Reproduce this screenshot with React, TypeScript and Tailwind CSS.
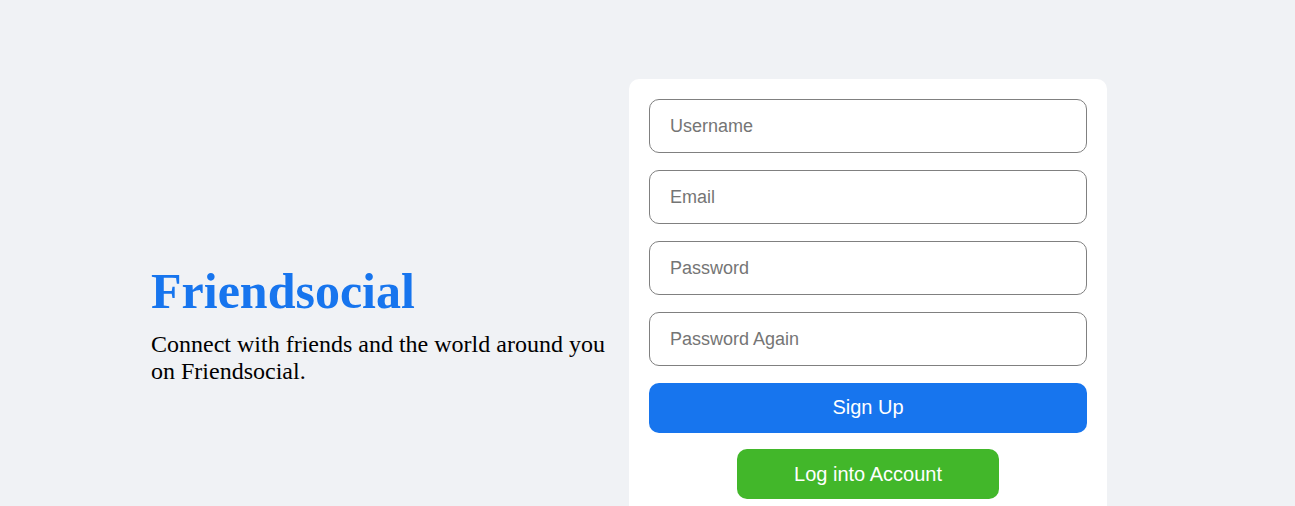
export default function App() {
  return (
    <div className="min-h-screen w-full bg-[#f0f2f5] pl-[151px] pt-[79px]">
      <div className="flex w-[956px] items-start">
        <div className="flex flex-1 flex-col pt-[184px] font-['Liberation_Serif',serif]">
          <h3 className="mb-[11px] text-[50px] font-extrabold leading-[57px] text-[#1775ee]">Friendsocial</h3>
          <span className="text-[24px] leading-[27px] text-black">
            Connect with friends and the world around you on Friendsocial.
          </span>
        </div>
        <div className="flex flex-1 flex-col">
          <div className="flex flex-col rounded-[10px] bg-white p-[20px] font-['Liberation_Sans',Arial,sans-serif]">
            <div className="flex flex-col gap-[17px]">
              <input placeholder="Username" className="h-[54px] rounded-[10px] border border-[#808080] pl-[20px] text-[18px] outline-none placeholder:text-[#757575]" />
              <input placeholder="Email" className="h-[54px] rounded-[10px] border border-[#808080] pl-[20px] text-[18px] outline-none placeholder:text-[#757575]" />
              <input placeholder="Password" type="password" className="h-[54px] rounded-[10px] border border-[#808080] pl-[20px] text-[18px] outline-none placeholder:text-[#757575]" />
              <input placeholder="Password Again" type="password" className="h-[54px] rounded-[10px] border border-[#808080] pl-[20px] text-[18px] outline-none placeholder:text-[#757575]" />
              <button className="h-[50px] rounded-[10px] bg-[#1775ee] pb-[2px] text-[20px] font-medium text-white">Sign Up</button>
            </div>
            <button className="mt-[16px] h-[50px] w-[60%] self-center rounded-[10px] bg-[#42b72a] text-[20px] font-medium text-white">
              Log into Account
            </button>
          </div>
        </div>
      </div>
    </div>
  );
}
